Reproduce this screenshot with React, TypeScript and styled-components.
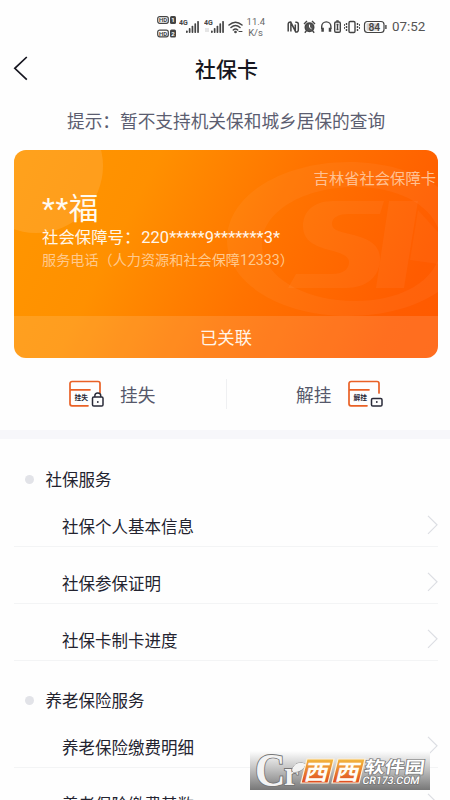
import React from "react";
import styled, { createGlobalStyle } from "styled-components";

const Global = createGlobalStyle`
  * { box-sizing: border-box; }
  body { margin: 0; background: #fefefe; }
`;

const Screen = styled.main`
  position: relative;
  width: 450px;
  height: 800px;
  overflow: hidden;
  background: #fefefe;
  color: #23232f;
  font-family: Roboto, "Noto Sans CJK SC", sans-serif;
`;

const StatusBar = styled.header`
  height: 42px;
  padding: 14px 25px 0 157px;
  display: flex;
  justify-content: space-between;
  color: #444;
`;

const StatusGroup = styled.div<{ $gap?: number }>`
  display: flex;
  align-items: center;
  gap: ${(p) => p.$gap ?? 0}px;
  height: 26px;
`;

const Speed = styled.div`
  width: 18px;
  margin-left: 1px;
  font-size: 9.5px;
  line-height: 11px;
  text-align: center;
  color: #666;
`;

const Clock = styled.time`
  width: 33px;
  margin-left: 4px;
  font-size: 13.4px;
  line-height: 26px;
  color: #555;
`;

const NavBar = styled.nav`
  height: 55px;
  display: grid;
  grid-template-columns: 40px 1fr 37px;
  align-items: center;
`;

const BackButton = styled.button`
  height: 40px;
  padding: 0 0 2px 13px;
  border: 0;
  background: none;
  display: flex;
  align-items: center;
`;

const Title = styled.h1`
  margin: 0;
  font-size: 21px;
  line-height: 30px;
  font-weight: 500;
  text-align: center;
  color: #161620;
`;

const Hint = styled.p`
  margin: 0;
  padding: 12px 0 0 67px;
  height: 53px;
  font-size: 17.68px;
  line-height: 26px;
  white-space: nowrap;
  color: #5b5d70;
`;

const Card = styled.section`
  position: relative;
  width: 424px;
  height: 208px;
  margin-left: 14px;
  border-radius: 12px;
  overflow: hidden;
  display: flex;
  flex-direction: column;
  background: linear-gradient(117deg, #ff9700 0%, #ff9000 28%, #ff7300 57%, #ff5c00 88%, #ff5900 100%);
`;

const CardArt = styled.svg`
  position: absolute;
  inset: 0;
`;

const CardBody = styled.div`
  position: relative;
  flex: none;
  height: 166px;
  padding: 16px 2px 0 28px;
  white-space: nowrap;
`;

const Issuer = styled.div`
  font-size: 15.3px;
  line-height: 26px;
  text-align: right;
  color: #ffc193;
`;

const Holder = styled.div`
  font-size: 29.7px;
  line-height: 34px;
  color: #fffaf0;
`;

const Stars = styled.span`
  letter-spacing: 0.6px;
`;

const CardNumber = styled.div`
  margin-top: 1px;
  display: flex;
  font-size: 16.4px;
  line-height: 22px;
  color: #fff6ea;
`;

const Digits = styled.span`
  padding-left: 1px;
  letter-spacing: 0.05px;
`;

const Service = styled.div`
  font-size: 14.15px;
  line-height: 22px;
  color: #ffc98d;
`;

const Linked = styled.div`
  position: relative;
  height: 42px;
  background: rgba(255, 255, 255, 0.12);
  font-size: 17.3px;
  line-height: 45px;
  text-align: center;
  color: #fff5e9;
`;

const Actions = styled.div`
  height: 72px;
  display: grid;
  grid-template-columns: 226px 1px 1fr;
  align-items: center;
`;

const Action = styled.div<{ $start: number }>`
  display: flex;
  align-items: center;
  padding-left: ${(p) => p.$start}px;
  gap: 16px;
  font-size: 17.7px;
  line-height: 26px;
  color: #56586a;
`;

const ActionLabel = styled.span`
  padding-top: 3px;
`;

const Separator = styled.i`
  height: 30px;
  background: #eff0f2;
`;

const Band = styled.div`
  height: 9px;
  background: #f7f7fa;
`;

const GroupTitle = styled.h2`
  margin: 0;
  height: 50px;
  padding: 28px 0 0 25px;
  display: flex;
  align-items: center;
  gap: 11.5px;
  font-size: 16.5px;
  line-height: 20px;
  font-weight: 400;
`;

const GroupName = styled.span`
  padding-top: 3px;
`;

const Dot = styled.i`
  width: 9px;
  height: 9px;
  border-radius: 50%;
  background: #e2e3e8;
`;

const Row = styled.div`
  height: 57px;
  margin: 0 12px 0 14px;
  padding: 14px 0 0 48px;
  display: flex;
  align-items: center;
  justify-content: space-between;
  border-bottom: 1px solid #f3f4f5;
  font-size: 16.5px;
  line-height: 24px;
`;

const RowLabel = styled.span`
  padding-top: 5px;
`;

const Groups = styled.div`
  padding-top: 1px;
`;

const Watermark = styled.svg`
  position: absolute;
  left: 250px;
  top: 751px;
`;

const HdBadges = () => (
  <svg width="20" height="24" viewBox="0 0 20 24">
    {[1, 2].map((n) => (
      <g key={n} transform={`translate(0 ${n === 1 ? 1 : 14.5})`} fontFamily="Roboto" fontWeight="700">
        <rect x=".7" y=".7" width="10.6" height="6.6" rx="2" fill="none" stroke="#444" strokeWidth="1.2" />
        <text x="1.9" y="6.1" fontSize="6" fill="#444">HD</text>
        <rect x="13" y="0" width="6" height="8" rx="1.5" fill="#444" />
        <text x="14.3" y="6.3" fontSize="6" fill="#fff">{n}</text>
      </g>
    ))}
  </svg>
);

const Signal = ({ arrows }: { arrows?: boolean }) => (
  <svg width="22" height="18" viewBox="0 0 22 18">
    <text x="0" y="7.3" fontSize="7" fontWeight="700" fontFamily="Roboto" fill="#444">4G</text>
    {arrows && <path d="M2 10v4m2 0v-4" stroke="#ccc" />}
    {[0, 1, 2, 3, 4].map((i) => (
      <rect key={i} x={7 + i * 2.8} y={12.5 - i * 2.4} width="1.7" height={2.5 + i * 2.4} rx=".7" fill="#444" />
    ))}
  </svg>
);

const Wifi = () => (
  <svg width="15" height="18" viewBox="0 0 15 18" fill="none" stroke="#444" strokeWidth="1.5" strokeLinecap="round">
    <path d="M1 7Q7.500 1.500 14 7M3 9.500Q7.500 5.500 12 9.500M5.300 12Q7.500 10 9.700 12" />
    <circle cx="7.500" cy="14" r=".6" />
    <path d="M11 13.500h3" strokeWidth="1" />
  </svg>
);

const SystemIcons = () => (
  <svg width="101" height="18" viewBox="0 0 101 18" fill="none" stroke="#444" strokeWidth="1.4">
    <path d="M1.200 13.500V6a2.200 2.200 0 0 1 2.500-2L8.300 13V6.500M3.900 11.500V5.200M3.900 11.500 3.900 13.500M8.300 4.200h1a2 2 0 0 1 2 2V12a2 2 0 0 1-2.500 2L3.900 4.700" strokeWidth="1.500" />
    <circle cx="22.500" cy="9.300" r="4.300" fill="#555" />
    <path d="M22.500 6.600V9.300l2 1.500" stroke="#fff" strokeWidth="1" />
    <path d="M17 6l3-3M28 6l-3-3M19.500 12.600L17.800 14.800M25.500 12.600l1.700 2.200" />
    <path d="M34.700 11V8.500a4.600 4.600 0 0 1 9.200 0V11" />
    <path d="M35.600 9.800v4M43 9.800v4" strokeWidth="2.500" />
    <rect x="47.700" y="4" width="5.600" height="10.300" rx="1.300" />
    <path d="M49.300 3h2.400M50.500 6v6M49.500 6.500h2M49.500 11.500h2" />
    <rect x="62" y="3.500" width="6" height="11" rx="1.200" />
    <path d="M59.500 5v8M70.500 5v8" strokeDasharray="2 1" />
    <path d="M57.500 6v6M72.500 6v6" strokeWidth=".9" strokeDasharray="2 1" />
    <rect x="77.500" y="3.500" width="19.500" height="11" rx="3" strokeWidth="1.200" />
    <rect x="79.500" y="5.300" width="13" height="7.400" rx="1" fill="#d2d2d2" stroke="none" />
    <path d="M98.900 7v4" />
    <text x="81.500" y="12.700" fontFamily="Roboto" fontSize="10.300" fontWeight="500" fill="#444" stroke="none">84</text>
  </svg>
);

const CardIcon = ({ label, locked }: { label: string; locked?: boolean }) => (
  <svg width="36" height="28" viewBox="0 0 36 28" fill="none" strokeLinecap="round">
    <path d="M20 25.800H4a2 2 0 0 1-2-2V3.500a2 2 0 0 1 2-2h26a2 2 0 0 1 2 2V13M2 9.800h20" stroke="#e96126" strokeWidth="1.700" />
    <text x="6.500" y="20.300" fontFamily="Noto Sans CJK SC" fontWeight="700" fontSize="6.800" fill="#292a38">{label}</text>
    <rect x="24.500" y={locked ? 17 : 18.500} width="10.500" height={locked ? 9 : 7.500} rx="1.300" stroke="#292a38" strokeWidth="1.500" />
    {locked && <path d="M26.800 16.500v-.5a3 3 0 0 1 6 0v.5" stroke="#292a38" strokeWidth="1.400" />}
    <circle cx="29.800" cy="22" r=".9" fill="#292a38" />
  </svg>
);

const Chevron = () => (
  <svg width="11" height="20" viewBox="0 0 11 20" fill="none" stroke="#dcdee3" strokeWidth="1.200">
    <path d="M1 .8 10 9.800 1 18.800" />
  </svg>
);

const groups = [
  { title: "社保服务", rows: ["社保个人基本信息", "社保参保证明", "社保卡制卡进度"] },
  { title: "养老保险服务", rows: ["养老保险缴费明细", "养老保险缴费基数"] },
];

export default function App() {
  return (
    <Screen>
      <Global />
      <StatusBar>
        <StatusGroup $gap={2.4}>
          <HdBadges />
          <Signal />
          <Signal arrows />
          <Wifi />
          <Speed>11.4 K/s</Speed>
        </StatusGroup>
        <StatusGroup>
          <SystemIcons />
          <Clock>07:52</Clock>
        </StatusGroup>
      </StatusBar>
      <NavBar>
        <BackButton aria-label="返回">
          <svg width="15" height="25" viewBox="0 0 15 25" fill="none" stroke="#161620" strokeWidth="1.700">
            <path d="M13.800 1 1.800 12.300l12 11.400" />
          </svg>
        </BackButton>
        <Title>社保卡</Title>
      </NavBar>
      <Hint>提示：暂不支持机关保和城乡居保的查询</Hint>
      <Card>
        <CardArt width="424" height="208" viewBox="0 0 424 208">
          <circle cx="22" cy="16" r="67" fill="#fff" fillOpacity=".11" />
          <g fill="#fff" fillOpacity=".045">
            <path fillRule="evenodd" d="M335 12C269 12 213 45 213 90s56 76 122 76 120-31 120-76S401 12 335 12ZM341 37c52 0 86 25 86 57s-34 57-86 57-93-25-93-57 41-57 93-57Z" />
            <path d="M370 51H319c-20 0-30 11-30 25 0 15 12 20 26 24 12 3 20 6 20 12 0 8-7 12-17 12h-36l-8 14h58c20 0 34-11 34-29 0-15-12-20-26-24-12-3-22-4-22-11 0-7 7-10 17-10h31Z" />
            <path d="M375 51h29l-14 87h-28Z" />
            <path d="M404 60l20 22v32L396 110Z" fillOpacity=".03" />
          </g>
        </CardArt>
        <CardBody>
          <Issuer>吉林省社会保障卡</Issuer>
          <Holder>
            <Stars>**</Stars>福
          </Holder>
          <CardNumber>
            社会保障号：<Digits>220*****9*******3*</Digits>
          </CardNumber>
          <Service>服务电话（人力资源和社会保障12333）</Service>
        </CardBody>
        <Linked>已关联</Linked>
      </Card>
      <Actions>
        <Action $start={68}>
          <CardIcon label="挂失" locked />
          <ActionLabel>挂失</ActionLabel>
        </Action>
        <Separator />
        <Action $start={69}>
          <ActionLabel>解挂</ActionLabel>
          <CardIcon label="解挂" />
        </Action>
      </Actions>
      <Band />
      <Groups>
        {groups.map((group) => (
          <section key={group.title}>
            <GroupTitle>
              <Dot />
              <GroupName>{group.title}</GroupName>
            </GroupTitle>
            {group.rows.map((row) => (
              <Row key={row}>
                <RowLabel>{row}</RowLabel>
                <Chevron />
              </Row>
            ))}
          </section>
        ))}
      </Groups>
      <Watermark width="180" height="39" viewBox="0 0 180 39">
        <defs>
          <linearGradient id="shade" x1="0" y1="0" x2="0" y2="1">
            <stop offset="0" stopColor="#fefefe" />
            <stop offset=".5" stopColor="#bdbdbd" />
            <stop offset="1" stopColor="#777" />
          </linearGradient>
          <linearGradient id="tile" x1="0" y1="0" x2="0" y2="1">
            <stop offset="0" stopColor="#f3b83d" />
            <stop offset="1" stopColor="#df4a20" />
          </linearGradient>
        </defs>
        <rect width="180" height="39" fill="url(#shade)" />
        <g fill="#f3f3f3" stroke="#777" strokeWidth="1.800" paintOrder="stroke" fontFamily="Liberation Serif" fontWeight="700">
          <text transform="translate(5 34.500) scale(.96 1.070)" fontSize="44">C</text>
          <text x="34" y="34" fontSize="33">r</text>
          <path d="M42 19Q45 9 56 13Q52 22 43 21Z" strokeWidth="1" />
        </g>
        {[48, 79].map((x) => (
          <g key={x} transform={`translate(${x} 8) skewX(-14)`}>
            <path d="M9 0H36V24H9Z" fill="url(#tile)" stroke="#fff2db" strokeWidth="1.200" />
            <text transform="translate(10.300 20.500) scale(1.020 .92)" fontFamily="Noto Sans CJK SC" fontWeight="700" fontSize="23.500" fill="#fffdf5">西</text>
          </g>
        ))}
        <g fill="#fff" stroke="#777" strokeWidth="1.500" paintOrder="stroke">
          <text transform="translate(114 21.500) skewX(-8) scale(1.110 .92)" fontFamily="Noto Sans CJK SC" fontWeight="700" fontSize="18">软件园</text>
          <text transform="translate(112 33) skewX(-10)" fontFamily="Roboto" fontWeight="500" fontSize="10.500" textLength="57">CR173.COM</text>
        </g>
      </Watermark>
    </Screen>
  );
}
